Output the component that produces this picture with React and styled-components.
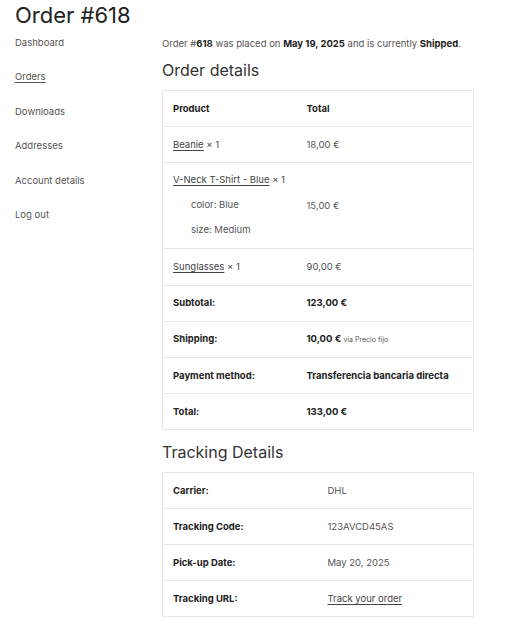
import React from "react";
import styled, { createGlobalStyle } from "styled-components";

const Global = createGlobalStyle`
  html, body { margin: 0; padding: 0; background: #fff; }
  body { font-family: Inter, "Noto Sans", sans-serif; color: #444; font-size: 9.5px; }
  * { box-sizing: border-box; }
`;

const Page = styled.div`
  padding: 0 38px 0 15px;
`;

const Title = styled.h1`
  margin: 0;
  padding-top: 2px;
  font-size: 22px;
  line-height: 26px;
  font-weight: 400;
  color: #222;
`;

const Layout = styled.div`
  display: grid;
  grid-template-columns: 147px 1fr;
`;

const Nav = styled.ul`
  list-style: none;
  margin: 0;
  padding: 10px 0 0;
  display: flex;
  flex-direction: column;
`;

const NavItem = styled.li`
  height: 34.4px;
  line-height: 10px;
  font-size: 9.5px;
  color: #555;
  text-decoration: ${(p) => (p.$active ? "underline" : "none")};
  text-underline-offset: 2px;
`;

const Main = styled.div`
  display: flex;
  flex-direction: column;
  padding-top: 9px;
`;

const Intro = styled.p`
  margin: 0;
  font-size: 9.5px;
  line-height: 14px;
  color: #555;
  white-space: nowrap;
  b { color: #222; font-weight: 700; }
`;

const SectionTitle = styled.h2`
  margin: ${(p) => p.$mt || "7px"} 0 0;
  font-size: 16px;
  line-height: 20px;
  font-weight: 400;
  color: #333;
`;

const Table = styled.table`
  width: 312px;
  border-collapse: collapse;
  border: 1px solid #e8e8e8;
  margin-top: ${(p) => p.$mt || "0"};
  table-layout: fixed;
`;

const Row = styled.tr`
  border-top: 1px solid #e8e8e8;
`;

const Cell = styled.td`
  height: ${(p) => p.$h || "36.2px"};
  padding: 0 10px;
  vertical-align: middle;
  font-size: 9.5px;
  line-height: 14px;
  white-space: nowrap;
  color: ${(p) => (p.$strong ? "#222" : "#555")};
  font-weight: ${(p) => (p.$strong ? 700 : 400)};
  width: ${(p) => p.$w || "auto"};
`;

const Link = styled.a`
  color: #444;
  text-decoration: underline;
  text-underline-offset: 2px;
`;

const Qty = styled.span`
  color: #444;
`;

const Meta = styled.div`
  padding-left: 18px;
  margin-top: 11px;
  line-height: 14px;
`;

const Small = styled.span`
  font-size: 7px;
  font-weight: 400;
  color: #555;
`;

const ProductCell = styled(Cell)`
  padding-top: 10px;
  padding-bottom: 11px;
`;

const tracking = [
  ["Carrier:", "DHL"],
  ["Tracking Code:", "123AVCD45AS"],
  ["Pick-up Date:", "May 20, 2025"],
];

export default function App() {
  return (
    <Page>
      <Global />
      <Title>Order #618</Title>
      <Layout>
        <Nav>
          <NavItem>Dashboard</NavItem>
          <NavItem $active>Orders</NavItem>
          <NavItem>Downloads</NavItem>
          <NavItem>Addresses</NavItem>
          <NavItem>Account details</NavItem>
          <NavItem>Log out</NavItem>
        </Nav>
        <Main>
          <Intro>
            Order #<b>618</b> was placed on <b>May 19, 2025</b> and is currently <b>Shipped</b>.
          </Intro>
          <SectionTitle $mt="9px">Order details</SectionTitle>
          <Table $mt="10px">
            <tbody>
              <Row>
                <Cell $strong $w="134px">Product</Cell>
                <Cell $strong>Total</Cell>
              </Row>
              <Row>
                <Cell><Link>Beanie</Link> <Qty>× 1</Qty></Cell>
                <Cell>18,00 €</Cell>
              </Row>
              <Row>
                <ProductCell>
                  <Link>V-Neck T-Shirt - Blue</Link> <Qty>× 1</Qty>
                  <Meta>color: Blue</Meta>
                  <Meta>size: Medium</Meta>
                </ProductCell>
                <Cell>15,00 €</Cell>
              </Row>
              <Row>
                <Cell><Link>Sunglasses</Link> <Qty>× 1</Qty></Cell>
                <Cell>90,00 €</Cell>
              </Row>
              <Row>
                <Cell $strong>Subtotal:</Cell>
                <Cell $strong>123,00 €</Cell>
              </Row>
              <Row>
                <Cell $strong>Shipping:</Cell>
                <Cell $strong>10,00 € <Small>via Precio fijo</Small></Cell>
              </Row>
              <Row>
                <Cell $strong>Payment method:</Cell>
                <Cell $strong>Transferencia bancaria directa</Cell>
              </Row>
              <Row>
                <Cell $strong>Total:</Cell>
                <Cell $strong>133,00 €</Cell>
              </Row>
            </tbody>
          </Table>
          <SectionTitle $mt="12px">Tracking Details</SectionTitle>
          <Table $mt="10px">
            <tbody>
              {tracking.map(([k, v], i) => (
                <Row key={k}>
                  <Cell $strong $h="36px" $w={i === 0 ? "155px" : undefined}>{k}</Cell>
                  <Cell $h="36px">{v}</Cell>
                </Row>
              ))}
              <Row>
                <Cell $strong $h="36px">Tracking URL:</Cell>
                <Cell $h="36px"><Link>Track your order</Link></Cell>
              </Row>
            </tbody>
          </Table>
        </Main>
      </Layout>
    </Page>
  );
}
